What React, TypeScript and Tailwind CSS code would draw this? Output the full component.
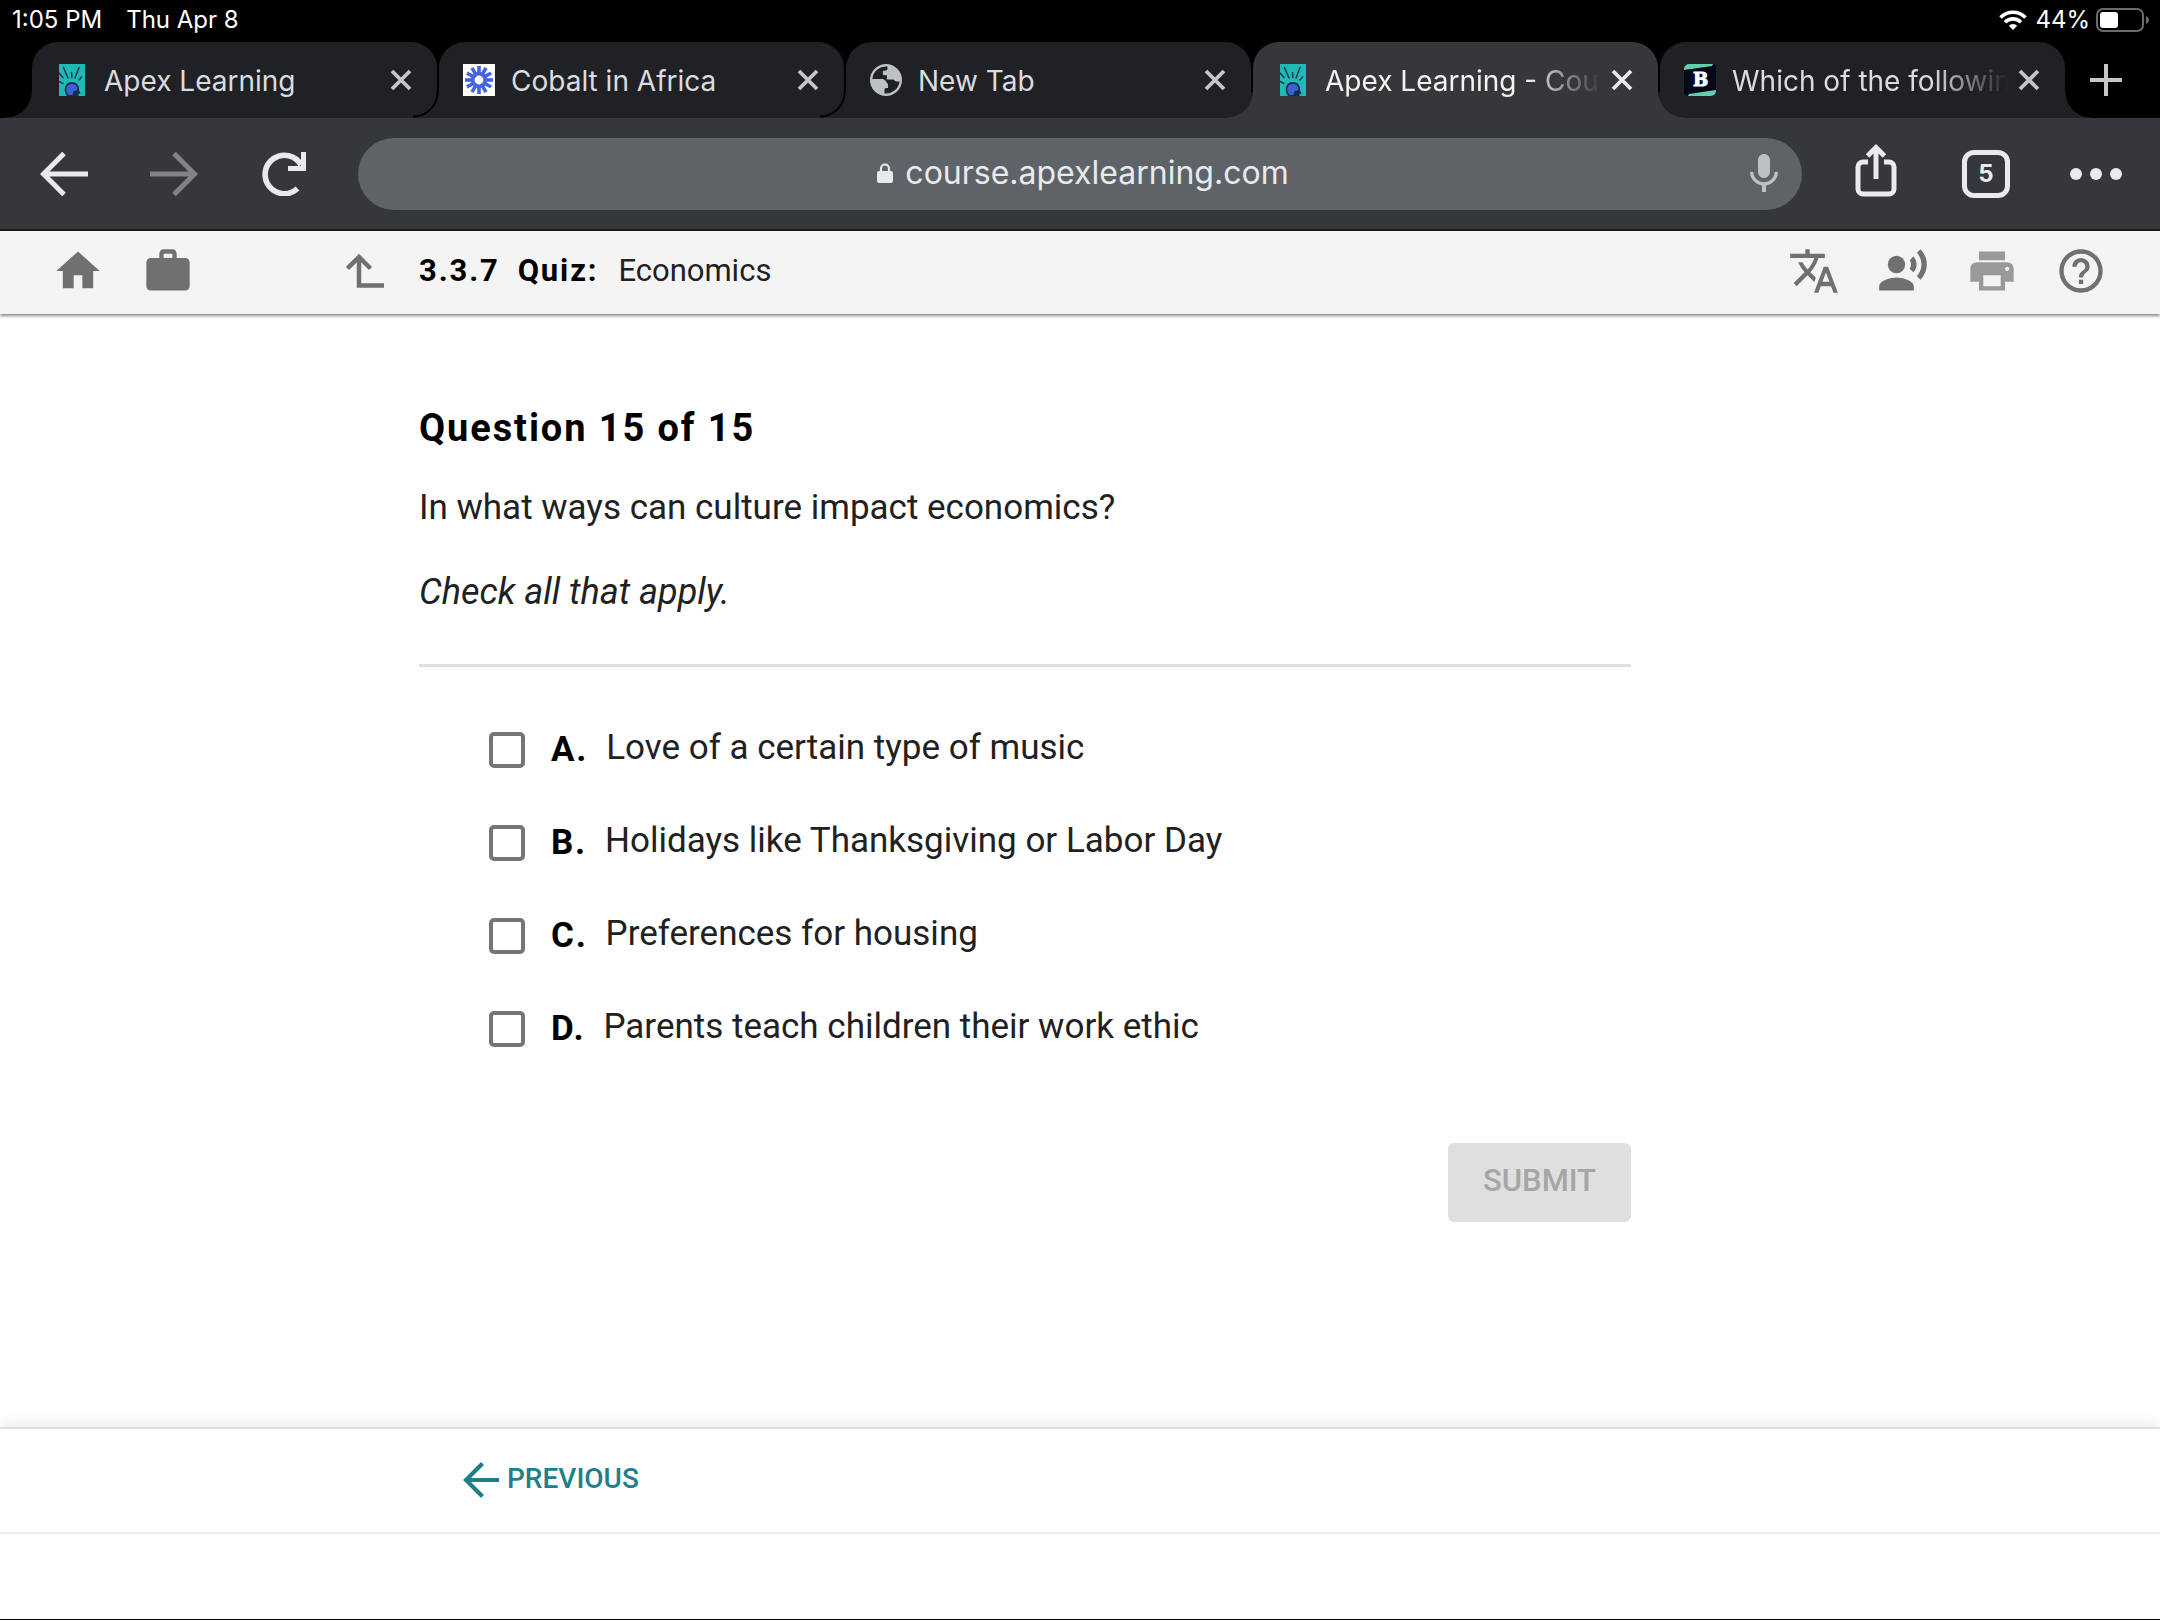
import React, { useState } from "react";
import {
  MdHome,
  MdWork,
  MdTranslate,
  MdRecordVoiceOver,
  MdPrint,
  MdHelpOutline,
  MdMic,
} from "react-icons/md";

type TabData = {
  id: number;
  title: string;
  icon: React.ReactNode;
  long?: boolean;
};

const ApexIcon = () => (
  <svg viewBox="0 0 26 32" className="h-8 w-[26px]">
    <rect width="26" height="32" fill="#1fb9b6" />
    <g stroke="#0d3b4a" strokeWidth="1.5" strokeLinecap="round" fill="none">
      <path d="M4.500 3.500L9 14M12.500 8.500l.4 5M20 3.500L16 14M0 9l4 4.500M0 17.500l3.800 2M22.500 13l-2.500 3" />
    </g>
    <path d="M8 32c-4.500-6-2-14 4.800-14 5.700 0 7.700 4.500 7.200 8l1.500 3.500-2 .5V32z" fill="#12304d" />
    <path d="M9.500 31c-4-5.500-2-11 3.500-11 4 0 6 3 5 6.500l-3.500.5-1 4z" fill="#3b63cf" />
  </svg>
);

const SunIcon = () => (
  <svg viewBox="0 0 32 32" className="h-8 w-8">
    <rect width="32" height="32" fill="#fff" />
    <g stroke="#4763e4" strokeWidth="3.600">
      {[0, 30, 60, 90, 120, 150].map((deg) => (
        <path key={deg} d="M16 2v28" transform={`rotate(${deg} 16 16)`} />
      ))}
    </g>
    <circle cx="16" cy="16" r="8" fill="#4763e4" />
    <circle cx="16" cy="16" r="4.400" fill="#fff" />
  </svg>
);

const GlobeIcon = () => (
  <svg viewBox="0 0 32 32" className="h-8 w-8">
    <circle cx="16" cy="16" r="16" fill="#bdc1c6" />
    <path d="M2.400 15A13.600 13.600 0 0 1 17.500 2.500V4.500c0 1.600-1.300 2.200-3 2.200h-1.600v3.200c0 1 1.500 1.600 4 1.600v3.500z" fill="#202124" />
    <path d="M17 15.500h6.500c1 1.500 2.500 2.400 6 2A13.600 13.600 0 0 1 14.500 29.500V26c0-1.600.6-2 2-2H18v-3.500c0-1.600-2-1.500-2-3.500l-3-2v-3.500h4z" fill="#202124" />
  </svg>
);

const BrainlyIcon = () => (
  <svg viewBox="0 0 32 32" className="h-8 w-8">
    <rect width="32" height="32" rx="4" fill="#05081a" />
    <path d="M0 6V5a5 5 0 0 1 5-5h24l-1 2z" fill="#60d0ab" />
    <path d="M32 26v1a5 5 0 0 1-5 5H4l1-2z" fill="#60d0ab" />
    <text x="9" y="22" fontFamily="DejaVu Serif" fontSize="18" fontWeight="700" fill="#fff" stroke="#fff">
      B
    </text>
  </svg>
);

const tabs: TabData[] = [
  { id: 1, title: "Apex Learning", icon: <ApexIcon /> },
  { id: 2, title: "Cobalt in Africa", icon: <SunIcon /> },
  { id: 3, title: "New Tab", icon: <GlobeIcon /> },
  { id: 4, title: "Apex Learning - Courses", icon: <ApexIcon />, long: true },
  { id: 5, title: "Which of the following", icon: <BrainlyIcon />, long: true },
];

const answers = [
  { letter: "A", text: "Love of a certain type of music" },
  { letter: "B", text: "Holidays like Thanksgiving or Labor Day" },
  { letter: "C", text: "Preferences for housing" },
  { letter: "D", text: "Parents teach children their work ethic" },
];

const StatusBar = () => (
  <div className="flex h-[42px] items-start justify-between bg-black pl-3 pr-[10px] text-2xl leading-[40px] text-white">
    <div className="flex gap-6">
      <span className="leading-10">1:05 PM</span>
      <span className="leading-10">Thu Apr 8</span>
    </div>
    <div className="flex h-10 items-center gap-[6px]">
      <svg viewBox="0 0 28 20" className="mr-[2px] h-5 w-7" fill="none" stroke="#fff" strokeWidth="3.600">
        <path d="M1.500 7.500a17.500 17.500 0 0 1 25 0" />
        <path d="M6 12.200a11.300 11.300 0 0 1 16 0" />
        <path d="M14 20l-4.200-4.300a6 6 0 0 1 8.400 0z" fill="#fff" stroke="none" />
      </svg>
      <span>44%</span>
      <svg viewBox="0 0 54 24" className="h-6 w-[54px]">
        <rect x="1" y="1" width="46" height="22" rx="6" fill="none" stroke="#6b6b6b" strokeWidth="2" />
        <rect x="4" y="4" width="18" height="16" rx="3" fill="#fff" />
        <path d="M50 8c4 1.500 4 6.500 0 8z" fill="#6b6b6b" />
      </svg>
    </div>
  </div>
);

const TabItem: React.FC<{ tab: TabData; active: boolean; onSelect: () => void }> = ({ tab, active, onSelect }) => (
  <div
    className={
      "relative flex h-[76px] min-w-0 flex-1 items-center rounded-t-[26px] pl-6 pr-5 before:absolute before:bottom-0 before:right-full before:size-[26px] after:absolute after:bottom-0 after:left-full after:size-[26px] " +
      (active
        ? "z-10 bg-[#36373a] text-[#f1f3f4] before:bg-[radial-gradient(circle_at_top_left,transparent_25px,#36373a_26px)] after:bg-[radial-gradient(circle_at_top_right,transparent_25px,#36373a_26px)]"
        : "bg-[#202124] text-[#dadce0] before:bg-[radial-gradient(circle_at_top_left,transparent_23px,#000_24px,#000_25px,#202124_26px)] after:bg-[radial-gradient(circle_at_top_right,transparent_25px,#202124_26px)]")
    }
  >
    <button onClick={onSelect} className="flex min-w-0 flex-1 items-center gap-4 text-left">
      <span className="flex w-8 shrink-0 justify-center">{tab.icon}</span>
      <span
        className={
          "min-w-0 flex-1 overflow-hidden whitespace-nowrap pt-[2px] text-[28px] leading-10 " +
          (tab.long ? "[mask-image:linear-gradient(to_right,black_calc(100%-76px),transparent)]" : "")
        }
      >
        {tab.title}
      </span>
    </button>
    <button aria-label={`Close ${tab.title}`} className="ml-1 flex h-8 w-8 items-center justify-center">
      <svg viewBox="0 0 22 22" className="h-[22px] w-[22px]" stroke={active ? "#e8eaed" : "#c4c7ca"} strokeWidth="3.800">
        <path d="M2 2l18 18M20 2L2 20" />
      </svg>
    </button>
  </div>
);

const Toolbar = () => (
  <div className="flex h-[113px] items-center border-b-2 border-[#1c1c1f] bg-[#36373a] px-[9px]">
    <button aria-label="Back" className="flex w-[110px] justify-center">
      <svg viewBox="0 0 48 44" className="h-11 w-12" fill="none" stroke="#e8eaed" strokeWidth="5">
        <path d="M48 22H4M24 1.500L3.500 22 24 42.500" />
      </svg>
    </button>
    <button aria-label="Forward" disabled className="flex w-[110px] justify-center">
      <svg viewBox="0 0 48 44" className="h-11 w-12" fill="none" stroke="#828386" strokeWidth="5">
        <path d="M0 22h44M24 1.500L44.500 22 24 42.500" />
      </svg>
    </button>
    <button aria-label="Reload" className="flex w-[110px] justify-center">
      <svg viewBox="0 0 44 44" className="h-11 w-11" fill="none" stroke="#e8eaed">
        <path d="M35.500 36.500A19.200 19.200 0 1 1 39 13" strokeWidth="5.600" />
        <path d="M41.500 0v16.500H26" strokeWidth="5" />
      </svg>
    </button>
    <div className="mx-[19px] flex h-[72px] min-w-0 flex-1 items-center rounded-full bg-[#5e6367] pl-[68px] pr-[14px]">
      <div className="flex flex-1 items-center justify-center gap-3 pb-[2px]">
        <svg viewBox="0 0 16 20" className="h-5 w-4">
          <rect y="8" width="16" height="12" rx="2" fill="#e8eaed" />
          <path d="M4 9V5.500a4 4 0 0 1 8 0V9" fill="none" stroke="#e8eaed" strokeWidth="2.200" />
        </svg>
        <input
          type="text"
          aria-label="Address"
          defaultValue="course.apexlearning.com"
          className="bg-transparent text-[32px] leading-[44px] text-[#e8eaed] outline-none [field-sizing:content]"
        />
      </div>
      <button aria-label="Voice search">
        <MdMic className="size-12 text-[#bdc1c6]" />
      </button>
    </div>
    <button aria-label="Share" className="flex w-[110px] justify-center">
      <svg viewBox="0 0 42 64" className="h-16 w-[42px]" fill="none" stroke="#e8eaed" strokeWidth="5">
        <path d="M13 20H8a5 5 0 0 0-5 5v22a5 5 0 0 0 5 5h26a5 5 0 0 0 5-5V25a5 5 0 0 0-5-5h-5" />
        <path d="M21 37V6M12.500 14L21 5.500l8.500 8.500" />
      </svg>
    </button>
    <button aria-label="Open tabs" className="flex w-[110px] justify-center">
      <span className="flex size-12 items-center justify-center rounded-xl border-[5px] border-[#e8eaed] text-2xl font-bold leading-none text-[#e8eaed]">
        5
      </span>
    </button>
    <button aria-label="More" className="flex w-[110px] justify-center gap-2">
      <span className="size-3 rounded-full bg-[#e8eaed]" />
      <span className="size-3 rounded-full bg-[#e8eaed]" />
      <span className="size-3 rounded-full bg-[#e8eaed]" />
    </button>
  </div>
);

const CourseHeader = () => (
  <header className="relative flex h-[83px] items-center bg-[#f4f4f4] pb-1 pl-[52px] pr-[53px] text-[#707070] shadow-[0_2px_3px_rgba(0,0,0,0.45)]">
    <nav className="flex w-[367px] shrink-0 items-center gap-[38px]">
      <a href="#home" aria-label="Home">
        <MdHome className="size-[52px]" />
      </a>
      <a href="#portfolio" aria-label="Portfolio">
        <MdWork className="size-[52px]" />
      </a>
      <a href="#up" aria-label="Up one level" className="ml-auto mr-[35px]">
        <svg viewBox="0 0 38 34" className="h-[34px] w-[38px]" fill="none" stroke="#707070" strokeWidth="4.500">
          <path d="M1.500 14.500L13 3l11.500 11.500M13 3v28.500h25" />
        </svg>
      </a>
    </nav>
    <h1 className="flex flex-1 gap-5 text-[31px] leading-10 text-[#212121]">
      <span className="flex gap-[18px] font-bold tracking-[0.06em] text-black">
        <span>3.3.7</span>
        <span>Quiz:</span>
      </span>
      <span>Economics</span>
    </h1>
    <div className="flex gap-[37px]">
      <button aria-label="Translate">
        <MdTranslate className="size-[52px]" />
      </button>
      <button aria-label="Read aloud">
        <MdRecordVoiceOver className="size-[52px]" />
      </button>
      <button aria-label="Print" disabled>
        <MdPrint className="size-[52px] text-[#999]" />
      </button>
      <button aria-label="Help">
        <MdHelpOutline className="size-[52px]" />
      </button>
    </div>
  </header>
);

const Question = () => {
  const [checked, setChecked] = useState<string[]>([]);

  const toggle = (letter: string) => {
    setChecked((prev) => (prev.includes(letter) ? prev.filter((l) => l !== letter) : [...prev, letter]));
  };

  return (
    <main className="flex-1 pl-[419px] pr-8 pt-[90px] text-[35px] text-[#212121]">
      <div className="max-w-[1212px]">
        <h2 className="text-[38px] font-bold leading-[48px] tracking-wider text-black">Question 15 of 15</h2>
        <p className="mt-8 leading-[48px]">In what ways can culture impact economics?</p>
        <p className="mt-9 text-[36px] italic leading-[48px]">Check all that apply.</p>
        <hr className="mt-12 border-t-[3px] border-[#e0e0e0]" />

        <ul className="mt-[59px] flex flex-col gap-[45px] pl-[70px]">
          {answers.map((answer) => (
            <li key={answer.letter}>
              <label className="flex items-center leading-[48px]">
                <input
                  type="checkbox"
                  checked={checked.includes(answer.letter)}
                  onChange={() => toggle(answer.letter)}
                  className="size-9 appearance-none rounded-[5px] border-4 border-[#757575] checked:bg-[#757575]"
                />
                <span className="ml-[26px] font-bold tracking-wider text-black">{answer.letter}.</span>
                <span className="ml-[18px] pb-1 leading-[44px]">{answer.text}</span>
              </label>
            </li>
          ))}
        </ul>

        <div className="mt-[90px] flex justify-end">
          <button
            disabled={checked.length === 0}
            className="h-[79px] w-[183px] rounded-md bg-[#dfdfdf] pb-[2px] text-[31px] font-medium text-[#a6a6a6]"
          >
            SUBMIT
          </button>
        </div>
      </div>
    </main>
  );
};

const Footer = () => (
  <footer className="relative border-b border-black">
    <div className="flex h-[107px] items-center border-y-2 border-t-[#e0e0e0] border-b-[#ededed] pb-[2px] pl-[463px] shadow-[0_-4px_12px_rgba(0,0,0,0.08)]">
      <button className="flex items-center gap-2 text-[28px] font-medium text-[#1f7f8b]">
        <svg viewBox="0 0 36 36" className="size-9" fill="none" stroke="#1f7f8b" strokeWidth="4.200">
          <path d="M36 18H4M19.500 1.500L3 18l16.500 16.500" />
        </svg>
        <span className="pb-[2px] leading-10">PREVIOUS</span>
      </button>
    </div>
    <div className="h-[85px] bg-white" />
  </footer>
);

export default function App() {
  const [activeTab, setActiveTab] = useState(4);

  return (
    <div className="flex min-h-screen flex-col bg-white font-['Roboto',sans-serif]">
      <div className="font-['Inter',sans-serif]">
        <StatusBar />
        <div className="flex bg-black pl-8">
          <div className="flex min-w-0 flex-1 gap-[2px]">
            {tabs.map((tab) => (
              <TabItem key={tab.id} tab={tab} active={tab.id === activeTab} onSelect={() => setActiveTab(tab.id)} />
            ))}
          </div>
          <button aria-label="New tab" className="flex w-[95px] items-center justify-center pr-[14px]">
            <svg viewBox="0 0 32 32" className="h-8 w-8" stroke="#c4c7ca" strokeWidth="4">
              <path d="M16 0v32M0 16h32" />
            </svg>
          </button>
        </div>
        <Toolbar />
      </div>
      <CourseHeader />
      <Question />
      <Footer />
    </div>
  );
}
